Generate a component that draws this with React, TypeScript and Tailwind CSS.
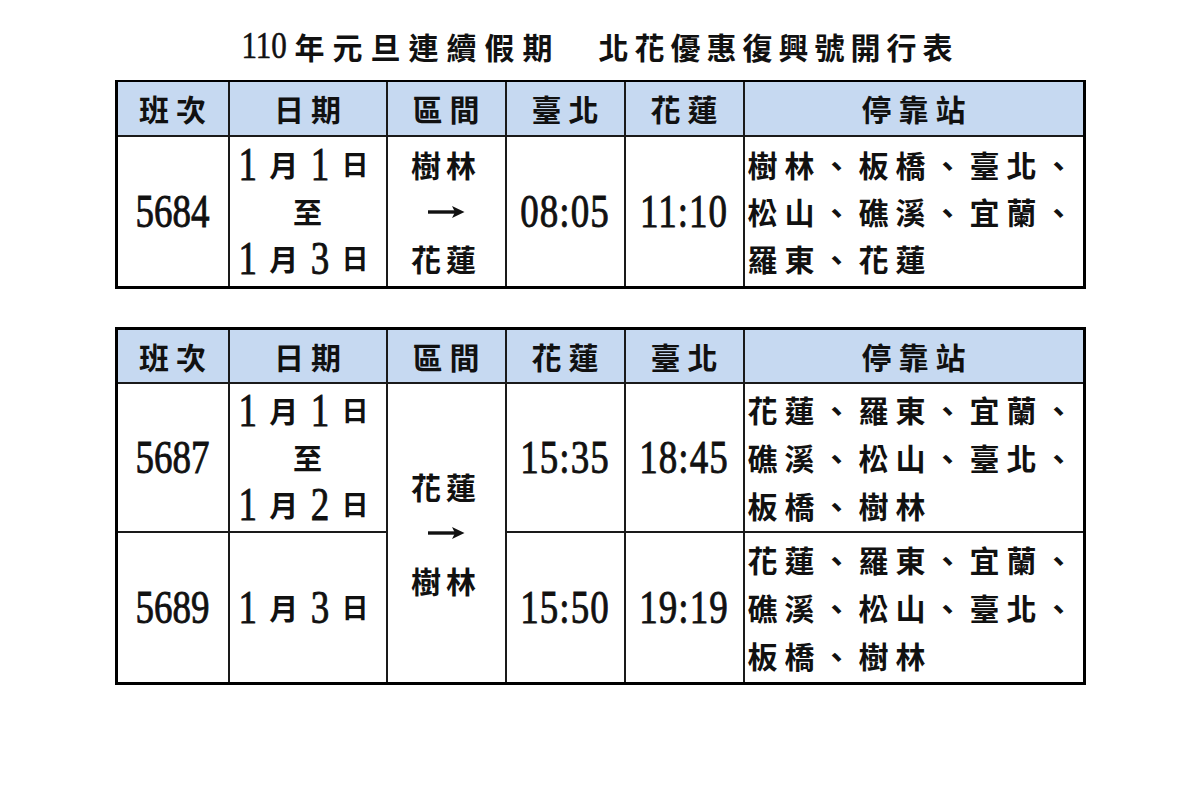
import React from "react";

const cjk = "font-['Noto_Sans_CJK_TC','Noto_Sans_CJK_SC',sans-serif]";
const serif = "font-['Liberation_Serif','Noto_Sans_CJK_TC',serif]";

function Num({ children, className = "" }: { children: React.ReactNode; className?: string }) {
  return (
    <span
      className={`${serif} inline-block origin-center scale-y-[1.25] text-[37px] font-normal leading-none [-webkit-text-stroke:0.7px_#111] ${className}`}
    >
      {children}
    </span>
  );
}

function Arrow() {
  return (
    <svg width="38" height="14" viewBox="0 0 38 14" className="block">
      <path d="M1 7 H30" stroke="#111" strokeWidth="3.4" fill="none" />
      <path d="M25 1 L37.5 7 L25 13 L28 7 Z" fill="#111" />
    </svg>
  );
}

function Header({ cols }: { cols: string[] }) {
  return (
    <>
      {cols.map((c, i) => (
        <div
          key={i}
          className={`bg-[#c6d9f1] flex items-center justify-center ${cjk} text-[30px] font-bold tracking-[7px] pl-[7px] text-[#111]`}
        >
          {c}
        </div>
      ))}
    </>
  );
}

function Cell({ children, className = "" }: { children?: React.ReactNode; className?: string }) {
  return <div className={`bg-white flex flex-col items-center justify-center ${className}`}>{children}</div>;
}

function DateLine({ a, b }: { a: string; b: string }) {
  return (
    <div className="flex h-[47px] w-[130px] items-center justify-between self-start ml-[9px]">
      <Num>{a}</Num>
      <span className={`${cjk} text-[29px] font-bold`}>月</span>
      <Num>{b}</Num>
      <span className={`${cjk} text-[27px] font-bold`}>日</span>
    </div>
  );
}

function CjkLine({ text, h = "h-[47px]", track = "tracking-[5px]" }: { text: string; h?: string; track?: string }) {
  return (
    <div className={`${h} flex items-center ${cjk} text-[30px] font-bold ${track} text-[#111]`}>{text}</div>
  );
}

function Stations({ lines, h, className = "" }: { lines: string[]; h: string; className?: string }) {
  return (
    <div className={`bg-white flex flex-col justify-center pl-[3px] ${className}`}>
      {lines.map((l, i) => (
        <CjkLine key={i} text={l} h={h} track="tracking-[7px]" />
      ))}
    </div>
  );
}

const grid =
  "mx-auto grid w-[971px] grid-cols-[110px_156px_117px_117px_117px_338px] gap-[2px] bg-[#1a1a1a] border-[3px] border-black text-[#111]";

const back = ["花蓮、羅東、宜蘭、", "礁溪、松山、臺北、", "板橋、樹林"];

export default function App() {
  return (
    <div className="min-h-[788px] w-[1200px] bg-white pt-[26px]">
      <div className={`flex h-[40px] items-center justify-center ${cjk} text-[30px] font-bold text-[#111]`}>
        <span
          className={`${serif} inline-block scale-y-[1.2] text-[31px] font-normal w-[46px] mr-[7px] [-webkit-text-stroke:0.5px_#111]`}
        >
          110
        </span>
        <span className="tracking-[8px]">年元旦連續假期</span>
        <span className="w-[38px]" />
        <span className="tracking-[6px]">北花優惠復興號開行表</span>
      </div>

      <div className={`${grid} mt-[14px] grid-rows-[53px_149px] border-t-[2px]`}>
        <Header cols={["班次", "日期", "區間", "臺北", "花蓮", "停靠站"]} />
        <Cell>
          <Num>5684</Num>
        </Cell>
        <Cell>
          <DateLine a="1" b="1" />
          <div className={`h-[47px] flex items-center ${cjk} text-[29px] font-bold`}>至</div>
          <DateLine a="1" b="3" />
        </Cell>
        <Cell>
          <CjkLine text="樹林" />
          <div className="h-[47px] flex items-center">
            <Arrow />
          </div>
          <CjkLine text="花蓮" />
        </Cell>
        <Cell>
          <Num className="tracking-[1px]">08:05</Num>
        </Cell>
        <Cell>
          <Num className="tracking-[1px]">11:10</Num>
        </Cell>
        <Stations lines={["樹林、板橋、臺北、", "松山、礁溪、宜蘭、", "羅東、花蓮"]} h="h-[47px]" />
      </div>

      <div className={`${grid} mt-[38px] grid-rows-[52px_147px_149px]`}>
        <Header cols={["班次", "日期", "區間", "花蓮", "臺北", "停靠站"]} />
        <Cell className="col-start-1 row-start-2">
          <Num>5687</Num>
        </Cell>
        <Cell className="col-start-2 row-start-2">
          <DateLine a="1" b="1" />
          <div className={`h-[47px] flex items-center ${cjk} text-[29px] font-bold`}>至</div>
          <DateLine a="1" b="2" />
        </Cell>
        <Cell className="col-start-3 row-start-2 row-span-2">
          <CjkLine text="花蓮" />
          <div className="h-[47px] flex items-center">
            <Arrow />
          </div>
          <CjkLine text="樹林" />
        </Cell>
        <Cell className="col-start-4 row-start-2">
          <Num className="tracking-[1px]">15:35</Num>
        </Cell>
        <Cell className="col-start-5 row-start-2">
          <Num className="tracking-[1px]">18:45</Num>
        </Cell>
        <Stations lines={back} h="h-[48px]" className="col-start-6 row-start-2" />

        <Cell className="col-start-1 row-start-3">
          <Num>5689</Num>
        </Cell>
        <Cell className="col-start-2 row-start-3">
          <DateLine a="1" b="3" />
        </Cell>
        <Cell className="col-start-4 row-start-3">
          <Num className="tracking-[1px]">15:50</Num>
        </Cell>
        <Cell className="col-start-5 row-start-3">
          <Num className="tracking-[1px]">19:19</Num>
        </Cell>
        <Stations lines={back} h="h-[48px]" className="col-start-6 row-start-3" />
      </div>
    </div>
  );
}
